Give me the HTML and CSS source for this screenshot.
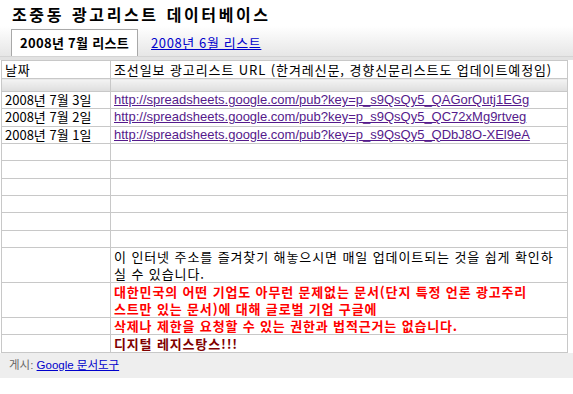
FILE: index.html
```html
<!DOCTYPE html>
<html lang="ko">
<head>
<meta charset="utf-8">
<title>조중동 광고리스트 데이터베이스</title>
<link rel="stylesheet" href="styles.css">
</head>
<body>
<div class="header">
  <h1 class="title">조중동 광고리스트 데이터베이스</h1>
  <div class="tabs">
    <span class="tab active">2008년 7월 리스트</span>
    <a class="tab link" href="#">2008년 6월 리스트</a>
  </div>
</div>
<div class="band"></div>
<table class="sheet">
  <colgroup><col class="c1"><col class="c2"></colgroup>
  <tr class="hrow"><td><div class="cell ko">날짜</div></td><td><div class="cell ko">조선일보 광고리스트 URL (한겨레신문, 경향신문리스트도 업데이트예정임)</div></td></tr>
  <tr class="shim"><td><div class="cell"></div></td><td><div class="cell"></div></td></tr>
  <tr class="row"><td><div class="cell">2008년 7월 3일</div></td><td><div class="cell latin"><a class="url" href="#">http://spreadsheets.google.com/pub?key=p_s9QsQy5_QAGorQutj1EGg</a></div></td></tr>
  <tr class="row"><td><div class="cell">2008년 7월 2일</div></td><td><div class="cell latin"><a class="url" href="#">http://spreadsheets.google.com/pub?key=p_s9QsQy5_QC72xMg9rtveg</a></div></td></tr>
  <tr class="row"><td><div class="cell">2008년 7월 1일</div></td><td><div class="cell latin"><a class="url" href="#">http://spreadsheets.google.com/pub?key=p_s9QsQy5_QDbJ8O-XEl9eA</a></div></td></tr>
  <tr class="row"><td><div class="cell"></div></td><td><div class="cell"></div></td></tr>
  <tr class="row"><td><div class="cell"></div></td><td><div class="cell"></div></td></tr>
  <tr class="row"><td><div class="cell"></div></td><td><div class="cell"></div></td></tr>
  <tr class="row"><td><div class="cell"></div></td><td><div class="cell"></div></td></tr>
  <tr class="row"><td><div class="cell"></div></td><td><div class="cell"></div></td></tr>
  <tr class="row"><td><div class="cell"></div></td><td><div class="cell"></div></td></tr>
  <tr class="two"><td><div class="cell"></div></td><td><div class="cell ko">이 인터넷 주소를 즐겨찾기 해놓으시면 매일 업데이트되는 것을 쉽게 확인하<br>실 수 있습니다.</div></td></tr>
  <tr class="two"><td><div class="cell"></div></td><td><div class="cell red">대한민국의 어떤 기업도 아무런 문제없는 문서(단지 특정 언론 광고주리<br>스트만 있는 문서)에 대해 글로벌 기업 구글에</div></td></tr>
  <tr class="one"><td><div class="cell"></div></td><td><div class="cell red">삭제나 제한을 요청할 수 있는 권한과 법적근거는 없습니다.</div></td></tr>
  <tr class="last"><td><div class="cell"></div></td><td><div class="cell maroon">디지털 레지스탕스!!!</div></td></tr>
</table>
<div class="footer"><span class="by">게시:</span> <a class="flink" href="#">Google 문서도구</a></div>
</body>
</html>
```

FILE: styles.css
```css
html, body {
  margin: 0;
  padding: 0;
  background: #fff;
}
body {
  font-family: "Noto Sans CJK KR", "Liberation Sans", sans-serif;
  font-size: 13px;
  color: #000;
}
.header {
  height: 56px;
  background: linear-gradient(to bottom, #ffffff 0, #ffffff 26px, #e6e6e6 56px);
  overflow: hidden;
}
.title {
  margin: 0;
  padding: 4px 0 0 12px;
  font-size: 16px;
  line-height: 20px;
  font-weight: bold;
  letter-spacing: 2.6px;
  word-spacing: 1px;
}
.tabs {
  display: flex;
  align-items: flex-end;
  margin-top: 5px;
  padding-left: 11px;
  height: 27px;
}
.tab {
  line-height: 26px;
  height: 26px;
}
.tab.active {
  background: #fff;
  border: 1px solid #a8a8a8;
  border-bottom: none;
  padding: 0 8px 0 8px;
  font-weight: bold;
  letter-spacing: 0.3px;
}
.tab.link {
  margin-left: 13px;
  color: #0000cc;
  text-decoration: underline;
  letter-spacing: 0.6px;
}
.band {
  height: 4px;
  background: #e2e2e2;
  border-top: 1px solid #d4d4d4;
  box-sizing: border-box;
}
.sheet {
  border-collapse: collapse;
  table-layout: fixed;
  width: 567px;
  margin-left: 1px;
}
.c1 { width: 109px; }
.sheet td {
  border: 1px solid #c8c8c8;
  padding: 0;
  vertical-align: top;
}
.cell {
  padding: 0 3px;
  line-height: 17px;
  white-space: nowrap;
}
.ko { letter-spacing: 0.9px; }
.latin { font-family: "Liberation Sans", sans-serif; }
.hrow .cell { height: 17px; }
.shim td {
  background: linear-gradient(to bottom, #f4f4f4, #dddddd);
}
.shim .cell { height: 12px; }
.row .cell { height: 16.33px; line-height: 16.33px; }
.two .cell { height: 34px; }
.one .cell { height: 16px; line-height: 16px; }
.last .cell { height: 17px; }
.url {
  color: #551a8b;
  text-decoration: underline;
}
.red {
  color: #ff0000;
  font-weight: bold;
  letter-spacing: 0.85px;
}
.maroon {
  color: #800000;
  font-weight: bold;
  letter-spacing: 0.85px;
}
.footer {
  height: 25px;
  line-height: 24px;
  background: #eeeeee;
  padding-left: 9px;
  font-size: 11.5px;
  font-family: "Liberation Sans", "Noto Sans CJK KR", sans-serif;
}
.by { color: #666; }
.flink {
  color: #0000cc;
  text-decoration: underline;
}
```
